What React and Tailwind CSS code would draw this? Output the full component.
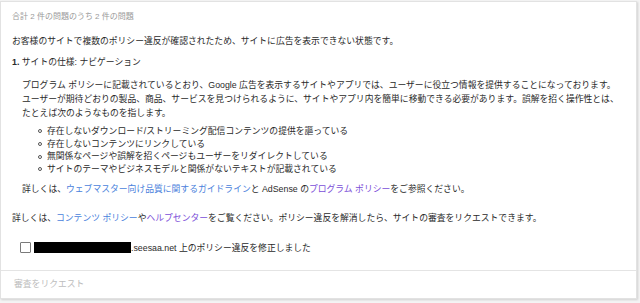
export default function App() {
  const font = { fontFamily: '"Liberation Sans", "Noto Sans CJK JP", sans-serif' };
  return (
    <div className="w-[640px] h-[303px] bg-[#f4f4f4] pt-px overflow-hidden" style={font}>
      <div className="w-[637px] bg-white border border-[#e2e2e2] shadow-[1px_1px_2px_rgba(0,0,0,0.15)] text-[#2a2a2a] text-[8.8px]">
        <div className="pt-[8px] px-[11px]">
          <div className="leading-[14px] text-[8px] text-[#9a9a9a]">合計 2 件の問題のうち 2 件の問題</div>
          <div className="mt-[10px] leading-[14px]">お客様のサイトで複数のポリシー違反が確認されたため、サイトに広告を表示できない状態です。</div>
          <div className="mt-[7px] leading-[14px]"><span className="font-bold">1.</span> サイトの仕様: ナビゲーション</div>
          <div className="pl-[10px]">
            <div className="mt-[9px] leading-[14px] pr-[6px]">
              プログラム ポリシーに記載されているとおり、Google 広告を表示するサイトやアプリでは、ユーザーに役立つ情報を提供することになっております。ユーザーが期待どおりの製品、商品、サービスを見つけられるように、サイトやアプリ内を簡単に移動できる必要があります。誤解を招く操作性とは、たとえば次のようなものを指します。
            </div>
            <ul className="mt-[5px] pl-[16px] leading-[12.7px]">
              {[
                "存在しないダウンロード/ストリーミング配信コンテンツの提供を謳っている",
                "存在しないコンテンツにリンクしている",
                "無関係なページや誤解を招くページもユーザーをリダイレクトしている",
                "サイトのテーマやビジネスモデルと関係がないテキストが記載されている",
              ].map((t) => (
                <li key={t} className="flex items-center">
                  <span className="w-[4px] h-[4px] rounded-full border border-[#555] mr-[5px] shrink-0"></span>
                  <span>{t}</span>
                </li>
              ))}
            </ul>
            <div className="mt-[6px] leading-[14px]">
              詳しくは、<span className="text-[#4a7fdc]">ウェブマスター向け品質に関するガイドライン</span>と AdSense の<span className="text-[#7b4ed8]">プログラム ポリシー</span>をご参照ください。
            </div>
          </div>
          <div className="mt-[15px] leading-[14px]">
            詳しくは、<span className="text-[#4a7fdc]">コンテンツ ポリシー</span>や<span className="text-[#7b4ed8]">ヘルプセンター</span>をご覧ください。ポリシー違反を解消したら、サイトの審査をリクエストできます。
          </div>
          <div className="mt-[16px] h-[14px] flex items-center pl-[8px]">
            <span className="w-[11px] h-[11px] border-[1.5px] border-[#7a7a7a] rounded-[1px] shrink-0"></span>
            <span className="ml-[3px] w-[97px] h-[11px] bg-black shrink-0"></span>
            <span className="leading-[14px]">.seesaa.net 上のポリシー違反を修正しました</span>
          </div>
        </div>
        <div className="mt-[15px] border-t border-[#e4e4e4] pt-[6px] pb-[7px] px-[13px]">
          <div className="leading-[14px] text-[#bdbdbd]">審査をリクエスト</div>
        </div>
      </div>
    </div>
  );
}
